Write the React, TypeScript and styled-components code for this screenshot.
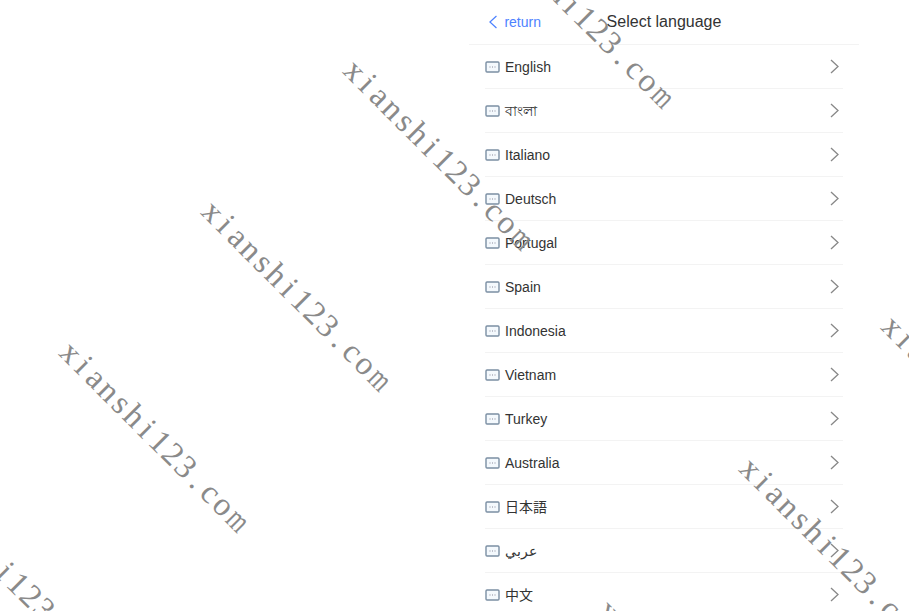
import React from 'react';
import styled, { createGlobalStyle } from 'styled-components';

const GlobalStyle = createGlobalStyle`
  html, body {
    margin: 0;
    padding: 0;
    height: 100%;
    background: #fff;
    overflow: hidden;
  }
  body {
    font-family: "Liberation Sans", "Noto Sans", "Noto Sans CJK JP", sans-serif;
  }
`;

const Page = styled.div`
  position: relative;
  height: 611px;
  overflow: hidden;
  padding-left: 469px;
`;

const Panel = styled.div`
  width: 390px;
`;

const Header = styled.header`
  position: relative;
  display: flex;
  align-items: center;
  justify-content: center;
  height: 43px;
  padding-bottom: 1px;
  border-bottom: 1px solid #f3f3f3;
`;

const BackLink = styled.a`
  position: absolute;
  left: 20px;
  top: 0;
  height: 44px;
  display: flex;
  align-items: center;
  gap: 7px;
  color: #4d82ff;
  font-size: 14px;
`;

const Title = styled.h1`
  margin: 0;
  font-size: 16px;
  font-weight: 400;
  color: #333;
`;

const List = styled.ul`
  list-style: none;
  margin: 0;
  padding: 0 16px;
`;

const Row = styled.li`
  display: flex;
  align-items: center;
  height: 43px;
  border-bottom: 1px solid #f3f3f3;
  padding-right: 4px;
  font-size: 14px;
  line-height: 20px;
  color: #333;
`;

const Label = styled.span`
  flex: 1;
  margin-left: 5px;
`;

const Stamp = styled.div`
  position: absolute;
  width: 270px;
  height: 36px;
  display: flex;
  justify-content: center;
  align-items: center;
  transform: rotate(45deg);
  pointer-events: none;
  font-family: "Liberation Serif", serif;
  font-size: 33px;
  color: #8a8a8a;
`;

const Cell = styled.span<{ $narrow?: boolean }>`
  display: inline-block;
  width: 18px;
  flex: none;
  text-align: center;
  transform: ${(p) => (p.$narrow ? 'scaleX(0.72)' : 'none')};
`;

const languages = ['English', 'বাংলা', 'Italiano', 'Deutsch', 'Portugal', 'Spain', 'Indonesia', 'Vietnam', 'Turkey', 'Australia', '日本語', 'عربي', '中文'];

const stamps = [
  [12, 577], [154, 435], [296, 294], [438, 153], [579, 11],
  [692, 693], [834, 551], [976, 409],
];

const LangIcon = () => (
  <svg width="15" height="12" viewBox="0 0 15 12" fill="none">
    <rect x="1" y="1" width="13" height="10" rx="1" fill="#f4f9fd" stroke="#7b8fa3" strokeWidth="1.4" />
    <path d="M4.5 6h1M7 6h1M9.5 6h1" stroke="#8a8a9a" strokeWidth="1" />
  </svg>
);

const Chevron = ({ dir, color, size }: { dir: 'left' | 'right'; color: string; size: number }) => (
  <svg width={size * 0.6} height={size} viewBox="0 0 9 15" fill="none">
    <path d={dir === 'right' ? 'M1 1l7 6.5L1 14' : 'M8 1L1 7.5 8 14'} stroke={color} strokeWidth="1.3" />
  </svg>
);

export default function App() {
  return (
    <Page>
      <GlobalStyle />
      <Panel>
        <Header>
          <BackLink>
            <Chevron dir="left" color="#4d82ff" size={14} />
            return
          </BackLink>
          <Title>Select language</Title>
        </Header>
        <List>
          {languages.map((lang) => (
            <Row key={lang}>
              <LangIcon />
              <Label>{lang}</Label>
              <Chevron dir="right" color="#888" size={15} />
            </Row>
          ))}
        </List>
      </Panel>
      {stamps.map(([x, y]) => (
        <Stamp key={x} style={{ left: x - 135, top: y - 18 }}>
          {'xianshi123.com'.split('').map((c, i) => (
            <Cell key={i} $narrow={c === 'm'}>{c}</Cell>
          ))}
        </Stamp>
      ))}
    </Page>
  );
}
